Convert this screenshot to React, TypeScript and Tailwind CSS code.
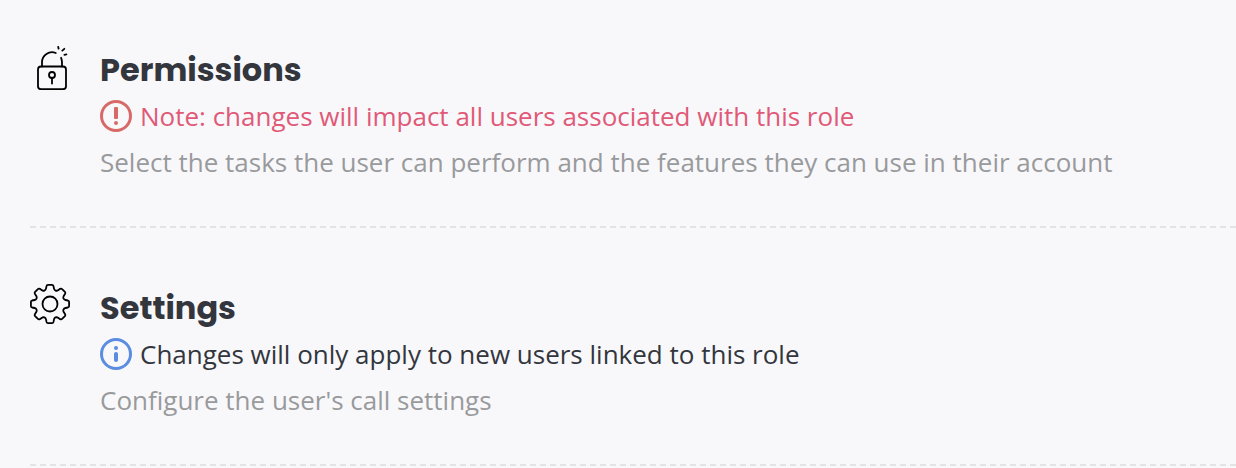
import { ReactNode } from 'react';

function LockIcon() {
    return (
        <svg className="w-10 h-11 shrink-0" viewBox="0 0 40 44" fill="none" stroke="#000" strokeWidth="1.8" strokeLinecap="round" strokeLinejoin="round" aria-hidden="true">
            <rect x="8" y="20.5" width="28" height="22.7" rx="3" />
            <path d="M12 20.500V16.200a10 10 0 0 1 13.800-9.200" />
            <path d="M31.100 11.800c.6 1.400.9 3 .9 4.700v4" />
            <circle cx="22" cy="29" r="3" />
            <path d="M22 32v5.500" />
            <path d="M28.200.9l.4 1.800M32.300 4.600l2-1.800M34.400 8.800l2-.4" />
        </svg>
    );
}

const toothAngles = [0, 45, 90, 135, 180, 225, 270, 315];

function rotate(x: number, y: number, angle: number) {
    const a = (angle * Math.PI) / 180;
    const rx = x * Math.cos(a) - y * Math.sin(a);
    const ry = x * Math.sin(a) + y * Math.cos(a);
    return `${rx.toFixed(2)} ${ry.toFixed(2)}`;
}

// One tooth from valley to valley, repeated around the centre
const gearPath = toothAngles
    .map((a, i) => {
        const p = (x: number, y: number) => rotate(x, y, a);
        const start = i === 0 ? `M${p(-5.6, -13.4)}` : '';
        return `${start}Q${p(-4.3, -14)} ${p(-4, -15.4)}L${p(-3.5, -17.9)}Q${p(-3.2, -19.1)} ${p(-2, -19.1)}L${p(2, -19.1)}Q${p(3.2, -19.1)} ${p(3.5, -17.9)}L${p(4, -15.4)}Q${p(4.3, -14)} ${p(5.6, -13.4)}`;
    })
    .join('');

function GearIcon() {
    return (
        <svg className="w-10 h-10 shrink-0" viewBox="-20 -20 40 40" fill="none" stroke="#000" strokeWidth="1.8" strokeLinejoin="round" aria-hidden="true">
            <path d={`${gearPath}Z`} />
            <circle r="7.500" />
        </svg>
    );
}

function WarningIcon() {
    return (
        <svg className="w-8 h-8 shrink-0" viewBox="0 0 32 32" fill="#d76a68" aria-hidden="true">
            <circle cx="16" cy="16" r="14.500" fill="none" stroke="#d76a68" strokeWidth="3" />
            <rect x="14" y="7" width="4" height="12" rx="1" />
            <circle cx="16" cy="23" r="2" />
        </svg>
    );
}

function InfoIcon() {
    return (
        <svg className="w-8 h-8 shrink-0" viewBox="0 0 32 32" fill="#5a8de0" aria-hidden="true">
            <circle cx="16" cy="16" r="14.500" fill="none" stroke="#5a8de0" strokeWidth="3" />
            <circle cx="16" cy="10" r="2" />
            <rect x="14" y="14" width="4" height="10" rx="2" />
        </svg>
    );
}

interface RoleSectionProps {
    icon: ReactNode;
    title: string;
    noteIcon: ReactNode;
    note: string;
    noteClass: string;
    description: string;
}

function RoleSection({ icon, title, noteIcon, note, noteClass, description }: RoleSectionProps) {
    return (
        <section className="flex items-start gap-[30px] pt-14 first:pt-[46px] pb-[41px] border-b-2 border-dashed border-[#e3e3e3]">
            {icon}
            <div className="min-w-0 pt-px text-[26px] leading-[46px]">
                <h2 className="font-['Poppins','Inter',sans-serif] text-[32px] leading-[46px] font-bold text-[#33363d]">{title}</h2>
                <p className={`flex items-center gap-2 ${noteClass}`}>
                    {noteIcon}
                    <span>{note}</span>
                </p>
                <p className="text-[#999a9c]">{description}</p>
            </div>
        </section>
    );
}

export default function App() {
    return (
        <main className="min-h-screen bg-[#f8f8fb] pl-[30px] font-['Open_Sans',sans-serif]">
            <RoleSection
                icon={<LockIcon />}
                title="Permissions"
                noteIcon={<WarningIcon />}
                note="Note: changes will impact all users associated with this role"
                noteClass="text-[#e05a78]"
                description="Select the tasks the user can perform and the features they can use in their account"
            />
            <RoleSection
                icon={<GearIcon />}
                title="Settings"
                noteIcon={<InfoIcon />}
                note="Changes will only apply to new users linked to this role"
                noteClass="text-[#33363d]"
                description="Configure the user's call settings"
            />
        </main>
    );
}
